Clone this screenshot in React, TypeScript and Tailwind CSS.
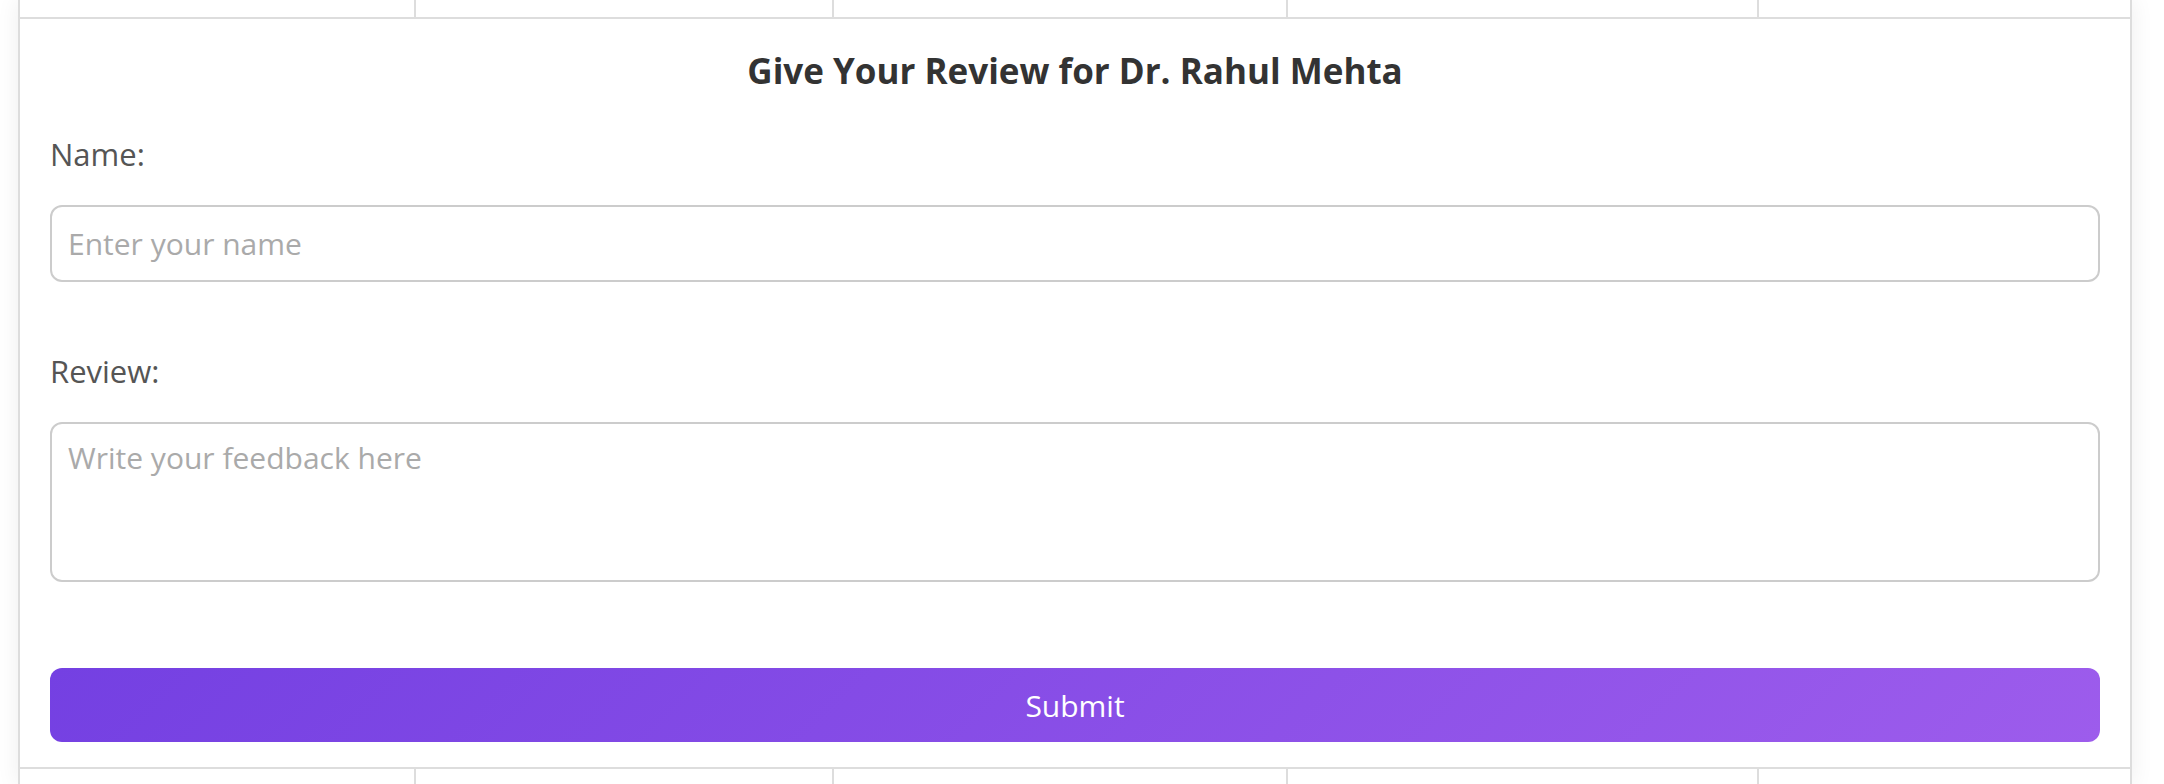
import { useState } from "react";

const cols = ["w-[396px]", "w-[418px]", "w-[454px]", "w-[471px]", "flex-1"];

function EdgeRow({ top }: { top?: boolean }) {
  return (
    <div
      className={`flex ${top ? "h-[19px] border-b-2" : "h-[18px] border-t-2"} border-[#ddd]`}
    >
      {cols.map((c, i) => (
        <div
          key={i}
          className={`${c} ${i < cols.length - 1 ? "border-r-2 border-[#ddd]" : ""}`}
        />
      ))}
    </div>
  );
}

export default function App() {
  const [name, setName] = useState("");
  const [review, setReview] = useState("");

  return (
    <div
      className="min-h-screen bg-white"
      style={{ fontFamily: '"Open Sans", "Noto Sans", sans-serif' }}
    >
      <div className="ml-[18px] w-[2114px] border-x-2 border-[#ddd] bg-white shadow-[0_0_22px_rgba(0,0,0,0.07)]">
        <EdgeRow top />

        {/* Review form */}
        <form
          className="flex flex-col px-[30px] pt-[28px] pb-[25px]"
          onSubmit={(e) => e.preventDefault()}
        >
          <h2 className="text-center text-[35px] font-bold leading-[48px] text-[#333]">
            Give Your Review for Dr. Rahul Mehta
          </h2>

          <label className="mt-[38px] text-[31px] font-medium leading-[42px] text-[#555]">
            Name:
          </label>
          <input
            type="text"
            value={name}
            onChange={(e) => setName(e.target.value)}
            placeholder="Enter your name"
            className="mt-[30px] h-[77px] rounded-[12px] border-2 border-[#ccc] px-[16px] text-[30px] text-[#333] outline-none placeholder:text-[#aaa]"
          />

          <label className="mt-[68px] text-[31px] font-medium leading-[42px] text-[#555]">
            Review:
          </label>
          <textarea
            value={review}
            onChange={(e) => setReview(e.target.value)}
            placeholder="Write your feedback here"
            className="mt-[30px] h-[160px] resize-none rounded-[12px] border-2 border-[#ccc] px-[16px] py-[13px] text-[30px] leading-[42px] text-[#333] outline-none placeholder:text-[#aaa]"
          />

          <button
            type="submit"
            className="mt-[86px] h-[74px] rounded-[12px] bg-[linear-gradient(135deg,#7440e2,#9d5cec)] text-[30px] text-white"
          >
            Submit
          </button>
        </form>

        <EdgeRow />
      </div>
    </div>
  );
}
